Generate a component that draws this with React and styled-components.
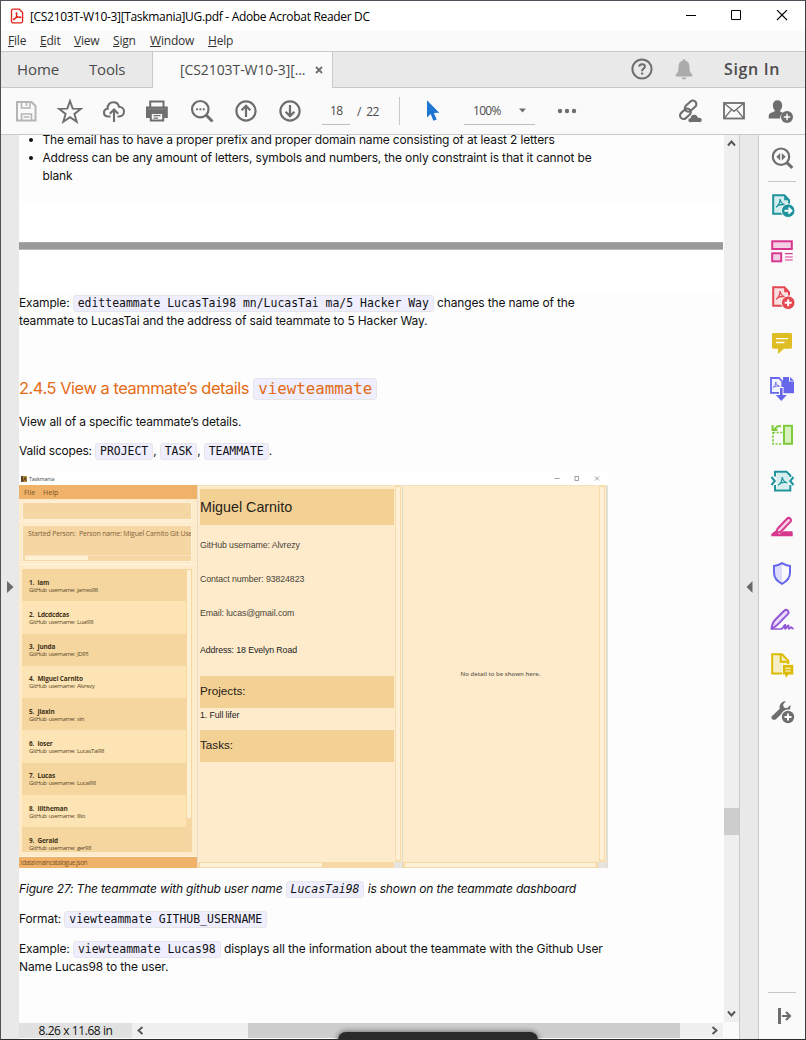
import React from "react";
import styled, { createGlobalStyle } from "styled-components";

const GlobalStyle = createGlobalStyle`
  * { box-sizing: border-box; }
  body { margin: 0; background: #fff; }
  ul, p, h1, h2 { margin: 0; padding: 0; font-weight: 400; }
`;

const ui = `"Open Sans", "Noto Sans", sans-serif`;
const gray = "#6e6e6e";

/* ---------- window chrome ---------- */
const Window = styled.div`
  position: relative;
  width: 806px;
  height: 1040px;
  overflow: hidden;
  display: flex;
  flex-direction: column;
  background: #fafafa;
  border: 1px solid #2b2b2b;
  border-left-color: #55504e;
  border-top-color: #4c525a;
  border-right-color: #3a3c44;
  font-family: ${ui};
`;
const TitleBar = styled.header`
  height: 30px;
  flex: none;
  background: #fff;
  display: flex;
  align-items: center;
  padding-left: 9px;
  font-size: 12px;
  color: #000;
`;
const TitleText = styled.span`
  margin-left: 6px;
  flex: 1;
  white-space: nowrap;
  letter-spacing: ${(p) => p.$ls}px;
`;
const WindowButton = styled.span`
  width: 46px;
  height: 28px;
  display: flex;
  align-items: center;
  justify-content: center;
`;
const MenuBar = styled.nav`
  height: 21px;
  flex: none;
  background: #fafafa;
  border-bottom: 1px solid #c9c9c9;
  display: flex;
  padding-left: 7px;
`;
const MenuItem = styled.span`
  width: ${(p) => p.$w}px;
  font-size: 12px;
  line-height: 19px;
  letter-spacing: -0.2px;
  color: #333;
  white-space: nowrap;
`;
const TabBar = styled.div`
  height: 36px;
  flex: none;
  background: #e9e9e9;
  border-bottom: 1px solid #c9c9c9;
  display: flex;
  color: #4b4b4b;
  font-size: 15px;
  line-height: 34px;
`;
const NavTab = styled.span`
  width: ${(p) => p.$w}px;
  padding-left: 16px;
  letter-spacing: ${(p) => p.$ls}px;
`;
const FileTab = styled.div`
  width: 181px;
  height: 36px;
  background: #fafafa;
  border-left: 1px solid #c9c9c9;
  border-right: 1px solid #c9c9c9;
  display: flex;
  align-items: center;
  padding-left: 27px;
  font-size: 14px;
  letter-spacing: ${(p) => p.$ls}px;
  white-space: nowrap;
`;
const TabLabel = styled.span`
  width: 135px;
`;
const TabActions = styled.div`
  margin-left: auto;
  height: 34px;
  display: flex;
  align-items: center;
`;
const ActionSlot = styled.span`
  width: 42px;
  height: 28px;
  display: flex;
  justify-content: center;
  svg { display: block; }
`;
const SignIn = styled.span`
  width: 81px;
  margin-left: 19px;
  font-size: 16px;
  font-weight: 600;
  letter-spacing: 0.65px;
  white-space: nowrap;
`;
const Toolbar = styled.div`
  height: 47px;
  flex: none;
  background: #fafafa;
  border-bottom: 1px solid #c9c9c9;
  display: flex;
  align-items: center;
  padding-left: 3px;
  font-size: 12px;
  color: #4b4b4b;
`;
const ToolSlot = styled.span`
  width: ${(p) => p.$w || 44}px;
  height: 28px;
  display: flex;
  justify-content: center;
  svg { display: block; overflow: visible; }
`;
const Field = styled.span`
  width: ${(p) => p.$w}px;
  height: 28px;
  margin-left: ${(p) => p.$ml}px;
  border-bottom: 1px solid #c0c0c0;
  display: flex;
  align-items: center;
  justify-content: space-between;
  padding: 0 ${(p) => p.$px}px;
  letter-spacing: ${(p) => p.$ls || 0}px;
`;
const PageTotal = styled.span`
  margin-left: 7px;
  width: 42px;
  white-space: pre;
  letter-spacing: -0.5px;
`;
const ToolDivider = styled.span`
  width: 1px;
  height: 28px;
  background: #c9c9c9;
`;
const Spacer = styled.span`
  flex: 1;
`;

/* ---------- body columns ---------- */
const Body = styled.div`
  flex: 1;
  min-height: 0;
  display: flex;
`;
const SideStrip = styled.div`
  width: ${(p) => p.$w}px;
  flex: none;
  background: #e9e9e9;
  display: flex;
  align-items: center;
  justify-content: center;
  border-left: ${(p) => (p.$edge ? "1px solid #c9c9c9" : "0")};
  border-right: ${(p) => (p.$edge ? "1px solid #c9c9c9" : "0")};
`;
const Viewer = styled.main`
  width: 705px;
  flex: none;
  display: flex;
  flex-direction: column;
  background: #fdfdfd;
`;
const Pages = styled.div`
  height: 888px;
  width: 704px;
  overflow: hidden;
`;
const BottomBar = styled.div`
  height: 15px;
  width: 704px;
  display: flex;
`;
const PageSize = styled.div`
  width: 113px;
  background: #e1e1e1;
  font-size: 12px;
  line-height: 16px;
  text-align: center;
  letter-spacing: -0.42px;
  color: #111;
  white-space: nowrap;
`;
const HTrack = styled.div`
  flex: 1;
  background: #f0f0f0;
  display: flex;
  align-items: center;
  padding: 0 4px;
`;
const HThumb = styled.div`
  width: 432px;
  height: 15px;
  margin-left: 103px;
  background: #cdcdcd;
`;
const VScroll = styled.div`
  width: 15px;
  height: 887px;
  flex: none;
  background: #efefef;
  display: flex;
  flex-direction: column;
  align-items: center;
  padding: 4px 0;
`;
const VThumb = styled.div`
  width: 15px;
  height: 27px;
  margin-top: 660px;
  background: #cdcdcd;
`;
const ToolPanel = styled.aside`
  flex: 1;
  display: flex;
  flex-direction: column;
  align-items: center;
  background: #fafafa;
`;
const PanelSlot = styled.span`
  height: 46px;
  width: 28px;
  display: flex;
  align-items: center;
  svg { display: block; }
`;
const PanelRule = styled.span`
  width: 28px;
  height: 1px;
  background: #c6c6c6;
`;
const DarkDock = styled.div`
  position: absolute;
  left: 337px;
  bottom: -4px;
  width: 200px;
  height: 11px;
  border-radius: 8px 8px 0 0;
  background: #2a2a2a;
  box-shadow: 0 0 5px 1px rgba(0, 0, 0, 0.45);
`;

/* ---------- PDF pages ---------- */
const PageEnd = styled.section`
  display: flow-root;
  height: 107px;
  background: linear-gradient(#fdfdfd 67px, #fff 67px);
`;
const PageGap = styled.div`
  height: 8px;
  background: #999;
  border-top: 1px solid #aaa;
  border-bottom: 1px solid #bbb;
`;
const Page = styled.section`
  padding-top: 44px;
  background: linear-gradient(#fff 42px, #fdfdfd 42px);
`;
const BulletList = styled.ul`
  list-style: none;
  && { margin-top: -4px; }
`;
const Bullet = styled.li`
  display: flex;
  padding-left: 10px;
  &::before {
    content: "";
    width: 4px;
    height: 4px;
    margin: 7px 9.5px 0 0;
    border-radius: 50%;
    background: #111;
  }
`;
const Para = styled.p`
  margin-top: ${(p) => p.$mt || 0}px;
`;
const Line = styled.span`
  display: block;
  height: 18px;
  font: ${(p) => (p.$italic ? "italic" : "normal")} 12px/18px Inter, sans-serif;
  letter-spacing: ${(p) => p.$ls || -0.155}px;
  color: #111;
  white-space: nowrap;
`;
const Code = styled.code`
  display: inline-block;
  height: ${(p) => (p.$big ? 22 : 17)}px;
  padding: 0 4px;
  border: 1px solid #e6e6ea;
  border-radius: 3px;
  background: #eeeefe;
  font-family: "DejaVu Sans Mono", monospace;
  font-size: ${(p) => (p.$big ? 15.8 : 11.45)}px;
  line-height: ${(p) => (p.$big ? 20 : 15)}px;
  letter-spacing: 0;
`;
const Heading = styled.h2`
  && { margin-top: 47px; }
  height: 22px;
  font: 400 16.4px/22px Inter, sans-serif;
  letter-spacing: ${(p) => p.$ls}px;
  color: #e46a14;
  white-space: nowrap;
`;

/* ---------- embedded Taskmania window ---------- */
const Figure = styled.figure`
  margin: 12px 0 12px;
  width: 589px;
  height: 396px;
  background: #fff;
  display: flex;
  flex-direction: column;
`;
const AppTitle = styled.div`
  height: 13px;
  flex: none;
  display: flex;
  align-items: center;
  padding-left: 2px;
  font-size: 5.3px;
  letter-spacing: -0.15px;
  color: #444;
`;
const AppLogo = styled.svg`
  margin-right: 2px;
`;
const AppControls = styled.svg`
  margin: 0 7px 0 auto;
`;
const AppBody = styled.div`
  flex: 1;
  display: flex;
  background: #fdebcc;
  min-height: 0;
`;
const Sidebar = styled.div`
  width: 178px;
  flex: none;
  display: flex;
  flex-direction: column;
`;
const AppBar = styled.div`
  height: ${(p) => p.$h}px;
  flex: none;
  background: #f0b268;
  padding-left: ${(p) => p.$pl}px;
  display: flex;
  align-items: center;
  gap: 8px;
  font-size: ${(p) => p.$fs}px;
  letter-spacing: ${(p) => p.$ls || 0}px;
  color: #7a5225;
`;
const CommandBox = styled.div`
  height: 18px;
  margin: 3px 5px 0 3px;
  background: #f6d6a3;
  border: 1px solid #fef1d9;
`;
const Rule = styled.div`
  height: 1px;
  margin-top: ${(p) => p.$mt}px;
  background: #fef3df;
`;
const ResultBox = styled.div`
  height: 37px;
  margin: 3px 5px 0 3px;
  background: #f6d6a3;
  border: 1px solid #fef1d9;
  overflow: hidden;
  display: flex;
  flex-direction: column;
  justify-content: space-between;
  color: #806138;
  font-size: 6.9px;
  line-height: 9px;
  white-space: pre;
`;
const ResultText = styled.span`
  padding: 3px 0 0 5px;
  letter-spacing: ${(p) => p.$ls}px;
`;
const ResultScroll = styled.div`
  height: 6px;
  border-top: 1px solid #fae3ba;
  padding-left: 2px;
  &::before {
    content: "";
    display: block;
    width: 63px;
    height: 4px;
    border-radius: 1px;
    background: #fef0d2;
  }
`;
const PersonArea = styled.div`
  margin: 4px 5px 0 3px;
  height: 283px;
  display: flex;
  background: #f6d7a2;
  overflow: hidden;
`;
const People = styled.div`
  width: 164px;
`;
const Person = styled.div`
  height: 32.3px;
  padding: 8.6px 0 0 7px;
  background: ${(p) => (p.$alt ? "#fde4b4" : "#f5d69f")};
  color: #3f3218;
  white-space: pre;
`;
const PersonName = styled.div`
  font-size: 6.4px;
  line-height: 9px;
  font-weight: 700;
  letter-spacing: -0.1px;
`;
const PersonUser = styled.div`
  font-size: 6px;
  line-height: 7.6px;
  letter-spacing: -0.36px;
  word-spacing: 0.6px;
  color: #5b4a2a;
`;
const PersonThumb = styled.div`
  width: 4px;
  height: 248px;
  margin: 1px 0 0 1px;
  border-radius: 1px;
  background: #fef0d2;
`;
const Pane = styled.div`
  display: flex;
  flex-direction: column;
  width: ${(p) => p.$w}px;
  flex: none;
  border-left: 1px solid #e3dccb;
`;
const PaneRow = styled.div`
  display: flex;
  flex: 1;
  min-height: 0;
`;
const Details = styled.div`
  flex: 1;
  padding: 3px 0 0 2px;
  font-family: "Liberation Sans", Arial, sans-serif;
  border-top: 1px solid #f4e0ba;
`;
const Band = styled.div`
  height: ${(p) => p.$h}px;
  margin-top: ${(p) => p.$mt || 0}px;
  background: #f3d094;
  font-size: ${(p) => p.$fs}px;
  line-height: ${(p) => p.$lh}px;
  color: #26221a;
`;
const Fact = styled.div`
  height: 12px;
  margin-top: ${(p) => p.$mt}px;
  font-size: 8.8px;
  line-height: 12px;
  letter-spacing: -0.1px;
  color: ${(p) => (p.$dark ? "#222" : "#4a4538")};
  white-space: nowrap;
`;
const Empty = styled.div`
  flex: 1;
  display: flex;
  align-items: center;
  justify-content: center;
  border-top: 1px solid #f4e0ba;
  font-size: 6px;
  font-weight: 600;
  color: #6b6557;
`;
const PaneVScroll = styled.div`
  width: 6px;
  margin: 0 1px;
  padding: 2px 1px;
  background: #f8dcaa;
  &::before {
    content: "";
    display: block;
    height: 100%;
    border-radius: 1px;
    background: #fef0d6;
  }
`;
const PaneFoot = styled.div`
  height: 6px;
  flex: none;
  display: flex;
  background: #e6e4df;
`;
const PaneHScroll = styled.div`
  flex: 1;
  margin-right: 8px;
  background: #f7d9a6;
  padding: 1px 0 1px 2px;
  &::before {
    content: "";
    display: block;
    width: ${(p) => p.$w}px;
    height: 4px;
    border-radius: 1px;
    background: #fef0d6;
  }
`;
const AppEdge = styled.div`
  flex: 1;
  background: #e3dfd4;
`;

/* ---------- icons ---------- */
const Svg = ({ children, w = 28, h = 28, color = gray, sw = 2 }) => (
  <svg width={w} height={h} viewBox={`0 0 ${w} ${h}`} fill="none" stroke={color} strokeWidth={sw}>
    {children}
  </svg>
);

const SaveIcon = () => (
  <Svg color="#b5b5b5">
    <path d="M5 5h14.500l4 4v14.500H5z" />
    <path d="M9.500 5v6h8.500V5M14.500 6v3" strokeWidth="1.500" />
    <path d="M9.500 23v-6h10v6M11.500 20h6" strokeWidth="1.600" />
  </Svg>
);
const StarIcon = () => (
  <Svg sw={1.9}>
    <path d="M14 4l2.700 7.600 8.100.300-6.400 5 2.300 7.800L14 20.100l-6.700 4.600 2.300-7.800-6.400-5 8.100-.3z" />
  </Svg>
);
const CloudUpIcon = () => (
  <Svg sw={2.1}>
    <path d="M10.500 19.500H8.200C5.600 19.500 4 17.800 4 15.600c0-2.100 1.500-3.700 3.600-3.900C7.300 7.900 10 5.200 13.300 5.200c3 0 5.200 2 5.700 4.600 3 0 5 2 5 4.800 0 2.800-2 4.900-4.700 4.900H17.500" />
    <path d="M14 25V13M9.800 16.700L14 12.500l4.200 4.200" />
  </Svg>
);
const PrintIcon = () => (
  <Svg>
    <g transform="translate(-1 0)">
      <path d="M7.200 10.500V4.500h13.300v6" />
      <path d="M3 9.500h21.800V21H20v-4H7.500v4H3z" fill={gray} stroke="none" />
      <path d="M5 12h18" stroke="#8b8b8b" strokeWidth=".8" />
      <path d="M7.800 16h12.400v7.500H7.800z" fill="#fafafa" />
      <path d="M10.500 18.700h7M10.500 21.200h4.500" strokeWidth="1.200" />
    </g>
  </Svg>
);
const ZoomIcon = () => (
  <Svg sw={2.2}>
    <circle cx="12.300" cy="12.200" r="8.200" />
    <path d="M18.300 18.200l6.200 6.300" strokeWidth="3" />
    <path d="M8 12.200h1.900M11.400 12.200h1.900M14.800 12.200h1.900" strokeWidth="1.900" />
  </Svg>
);
const ArrowCircle = ({ down }) => (
  <Svg sw={2.2}>
    <circle cx="14" cy="14" r="9.600" />
    <path d={down ? "M14 8v11M9.600 14.700l4.400 4.400 4.400-4.400" : "M14 20V9M9.600 13.300L14 8.900l4.400 4.400"} />
  </Svg>
);
const CursorIcon = () => (
  <svg width="14" height="28" viewBox="0 0 14 28">
    <path d="M2 3.300v17.200l3.700-3.600 2.700 6.800 3.300-1.300-2.800-6.500 5.300-.200z" fill="#1f76d2" />
  </svg>
);
const LinkCloudIcon = () => (
  <Svg sw={2.1}>
    <g transform="rotate(-42 12 13)">
      <rect x="1.500" y="10.600" width="12" height="7" rx="3.500" />
      <rect x="10" y="8.400" width="13" height="7" rx="3.500" />
    </g>
    <path d="M14.500 25.500c-1.800 0-2.800-1.200-2.600-2.600.2-1.300 1.200-2 2.300-2 .5-2.500 2-3.700 4-3.700 1.900 0 3.300 1.100 3.800 3 2.700-.1 4.200 1.100 4.200 2.800 0 1.500-1.100 2.500-2.600 2.500z" fill={gray} stroke="#fafafa" strokeWidth="1" />
  </Svg>
);
const MailIcon = () => (
  <Svg sw={1.8}>
    <rect x="4" y="6" width="20" height="15.500" />
    <path d="M4.500 6.500l9.500 7.800 9.500-7.800M4.500 21l7-8.300M23.500 21l-7-8.300" strokeWidth="1.300" />
  </Svg>
);
const PersonAddIcon = () => (
  <Svg>
    <path d="M11.500 3.200c3 0 4.700 2.100 4.700 5 0 2.300-.8 4-2 5.200v1.200l3 1.500c-2.500 1.500-3.200 3.300-3 5.500H2.700v-2.400c0-2 .8-2.900 2.500-3.500l3.500-1.500v-1C7.500 12 6.900 10.500 6.900 8.200c0-2.900 1.600-5 4.600-5z" fill={gray} stroke="none" transform="translate(-1 0)" />
    <circle cx="20" cy="20" r="6" fill={gray} stroke="none" />
    <path d="M20 16.800v6.400M16.800 20h6.400" stroke="#fff" strokeWidth="1.400" />
  </Svg>
);
const HelpIcon = () => (
  <Svg sw={2}>
    <circle cx="14" cy="14" r="9.600" />
    <path d="M11.200 11.700c.2-1.600 1.300-2.400 2.900-2.400 1.700 0 2.800.9 2.800 2.300 0 2-2.800 2.100-2.800 4.200v.4" />
    <path d="M13 18.600h2.200" />
  </Svg>
);
const BellIcon = () => (
  <Svg>
    <path d="M14 4.300c1 0 1.500.7 1.500 1.500 2.600.7 4 2.800 4 5.800 0 4.700.6 6.300 2.800 8v1.900H5.700v-1.900c2.200-1.700 2.800-3.300 2.800-8 0-3 1.400-5.100 4-5.800 0-.8.500-1.500 1.500-1.500zM11.500 22.500h5c-.3 1.300-1.300 1.900-2.500 1.900s-2.200-.6-2.500-1.900z" fill="#ababab" stroke="none" />
  </Svg>
);
const PdfIcon = () => (
  <svg width="14" height="17" viewBox="0 0 14 17" fill="none" stroke="#e2231a">
    <path d="M3 1.200h6.300l3.300 3.300v8.700c0 1-.7 1.700-1.700 1.700H3.200c-1 0-1.700-.7-1.700-1.700V2.900c0-1 .6-1.700 1.500-1.700z" strokeWidth="1.300" />
    <path d="M3.800 11.700c1.500-1 3-4 3.100-6 0-1.200-.9-1.200-.8 0 .2 2 2.200 3.900 4.100 4.100 1.300 0 1-1-.3-.9-2 .1-4.300.9-5.800 1.800-1 .7-1 1.300-.3 1z" strokeWidth="1.100" />
  </svg>
);

const Acrobat = ({ x, y, s = 1 }) => (
  <path transform={`translate(${x} ${y}) scale(${s})`} d="M0 9.500c2.400-1.500 4-5 4.100-8.200M4.100 1.500c.3 2.600 2 4.700 4.700 5.600M1.500 7.900c2-1.200 4.700-1.500 7.500-.9" strokeWidth={1.300} />
);
const DocBadge = ({ color, fill, badge }) => (
  <Svg color={color}>
    <path d="M5.200 4.300h11.200l4.600 4.900v13.600H5.200z" fill={fill} />
    <path d="M16.200 3.800v5.400h5z" fill={color} stroke="none" />
    <Acrobat x={8} y={6.800} />
    <circle cx="20.200" cy="19.700" r="6.800" fill={color} stroke="#fafafa" strokeWidth="1" />
    <path d={badge} stroke="#fff" strokeWidth="1.900" />
  </Svg>
);
const PanelSearch = () => (
  <Svg sw={2.2}>
    <circle cx="13" cy="12.700" r="8.200" />
    <path d="M19 18.800l5.300 5" strokeWidth="3" />
    <path d="M8.300 12.700L12.200 9v7.400zM17.700 12.700L13.800 9v7.400z" fill={gray} stroke="none" />
  </Svg>
);
const Organize = () => (
  <Svg color="#d83790">
    <rect x="4.200" y="4.300" width="19.600" height="7.700" fill="#f5d0e4" />
    <rect x="4.200" y="16.300" width="9" height="8" fill="#f5d0e4" />
    <path d="M17 16.700h7.700M17 20h7.700M17 23h7.700" strokeWidth="1.200" />
  </Svg>
);
const Comment = () => (
  <Svg>
    <path d="M5.500 4h17c.9 0 1.500.6 1.500 1.500v12.700c0 .9-.6 1.500-1.500 1.500h-6.700L10 25v-5.300H5.500c-.9 0-1.500-.6-1.500-1.500V5.500C4 4.600 4.600 4 5.500 4z" fill="#dfbd24" stroke="none" />
    <path d="M8 9.700h12M8 13.500h8.500" stroke="#fff" strokeWidth="1.300" />
  </Svg>
);
const Combine = () => (
  <Svg color="#6767ec">
    <path d="M3 3h8l3.300 3.500v11.300H3z" fill="#f3f3ff" strokeWidth="1.800" />
    <path d="M15 2h6v4.500h5v11.800H12V12h3zM22 2l4 3.800h-4z" fill="#6767ec" stroke="none" />
    <Acrobat x={4.700} y={6} s={0.75} />
    <path d="M13.300 12v10" stroke="#fafafa" strokeWidth="4.500" />
    <path d="M13.300 13v8" strokeWidth="2.600" />
    <path d="M7.800 20h11L13.300 26z" fill="#6767ec" stroke="none" />
  </Svg>
);
const Crop = () => (
  <Svg color="#7fcb3c">
    <rect x="16" y="4.800" width="8" height="18" fill="#d8f1c0" />
    <path d="M5 11v12h9.500M5 11.500h9.500" strokeDasharray="2.200 1.400" strokeWidth="1.700" />
    <path d="M13 5.300H9.500L6 8.500M4.500 4v5h5" />
  </Svg>
);
const Compress = () => (
  <Svg color="#1d939c">
    <path d="M8.500 6h9l4 4v12h-13z" fill="#d8edee" stroke="none" />
    <path d="M7 9.500V4.700h11.500L22.300 8.500V10M22.300 18v5.500H7V18" />
    <path d="M3.500 10l3.300 4-3.300 4M25.500 10l-3.300 4 3.300 4" />
    <Acrobat x={10.2} y={8.700} />
  </Svg>
);
const Highlight = () => (
  <Svg color="#d83790">
    <path d="M9.500 15.800L19 5.700c1-1 2.300-1 3.300-.1 1 1 .9 2.300 0 3.300L12.800 18.700 8 20z" fill="#f5d0e4" strokeLinejoin="round" />
    <path d="M3.300 23.300v-2.200l4-3.400 3.800 3.500 4.200-3h8c.9 0 1.400.5 1.400 1.400v3.700z" fill="#d83790" stroke="none" />
  </Svg>
);
const Shield = () => (
  <Svg color="#6767ec">
    <path d="M14 4.200c-2.500 1.600-5 2.500-8 2.700v6.600c0 5 3 8.800 8 11.300z" fill="#dcdcfa" stroke="none" />
    <path d="M14 4.200c2.500 1.600 5 2.500 8 2.700v6.600c0 5-3 8.800-8 11.300-5-2.500-8-6.300-8-11.300V6.900c3-.2 5.500-1.100 8-2.700z" />
  </Svg>
);
const Sign = () => (
  <Svg color="#9256d9">
    <path d="M3.500 23.800c.5-3.800 1.500-6.800 3.700-9l9-9c1-1.100 2.500-1.200 3.600-.2 1.100 1.100 1 2.500 0 3.500l-9 9.300c-2 2.200-4.500 4-7.300 5.400z" fill="#e9dcf8" strokeLinejoin="round" />
    <path d="M4 24h9.500c1.500-1 3.500-5 4-4 .4.900-1.300 3.600-.4 3.800 1 .2 2.500-3.800 3.300-3.500.7.300-.5 3.200.4 3.500.8.200 1.500-1.800 2.200-1.700.6.100.3 1.500 2.700 1.500" strokeWidth="1.700" />
  </Svg>
);
const DocComment = () => (
  <Svg color="#dcbb00">
    <path d="M4.200 3.300h9.800l6.300 6.500v12.700H4.200z" fill="#f5efc8" />
    <path d="M12.700 3.500v7.300h7.500" />
    <path d="M14.500 13.500h11.200v10.400h-5L17 27.400v-3.500h-2.500z" fill="#dcbb00" stroke="#fafafa" strokeWidth=".8" />
    <path d="M17.300 17.200h5.500M17.300 20h5.500" stroke="#fff" strokeWidth="1.100" />
  </Svg>
);
const Wrench = () => (
  <Svg>
    <path d="M3.800 19.200l7.900-7.400c-.9-3.800 1.900-7.600 6.200-7.800l-2.800 3.600.8 3 3.200.6 3.300-3.200c.9 4.400-2.800 7.600-6.700 6.700l-8 7.700c-2.600 1.400-5.300-1-3.900-3.200z" fill={gray} stroke="none" />
    <circle cx="20" cy="20" r="6.800" fill={gray} stroke="#fafafa" strokeWidth="1.200" />
    <path d="M20 16.500v7M16.500 20h7" stroke="#fff" strokeWidth="1.900" />
  </Svg>
);
const CollapseIcon = () => (
  <Svg>
    <path d="M11.500 6v16" strokeWidth="3" />
    <path d="M14 14h8M18 10l4 4-4 4" strokeWidth="2.200" />
  </Svg>
);
const Chevron = ({ d }) => (
  <svg width="9" height="9" viewBox="0 0 9 9" fill="none" stroke="#555" strokeWidth="1.900">
    <path d={d} />
  </svg>
);
const Triangle = ({ d }) => (
  <svg width="7" height="12" viewBox="0 0 7 12">
    <path d={d} fill="#6a6a6a" />
  </svg>
);

/* ---------- data ---------- */
const menus = [
  ["F", "ile", 32],
  ["E", "dit", 34],
  ["V", "iew", 39],
  ["S", "ign", 37],
  ["W", "indow", 58],
  ["H", "elp", 40],
];
const people = [
  ["iam", "james98"],
  ["Ldcdcdcas", "Luai98"],
  ["Junda", "JD95"],
  ["Miguel Carnito", "Alvrezy"],
  ["Jiaxin", "xin"],
  ["loser", "LucasTai98"],
  ["Lucas", "Lucai98"],
  ["Illtheman", "Illio"],
  ["Gerald", "ger98"],
];

const Taskmania = () => (
  <Figure>
    <AppTitle>
      <AppLogo width="6" height="6" viewBox="0 0 6 6">
        <rect width="6" height="6" fill="#b98a3c" />
        <rect width="2" height="6" fill="#5a4630" />
        <path d="M2.500 5L4 1.500 5.300 5" stroke="#3c2c18" fill="none" strokeWidth=".8" />
      </AppLogo>
      Taskmania
      <AppControls width="48" height="7" viewBox="0 0 48 7" fill="none" stroke="#888" strokeWidth=".8">
        <path d="M1.500 3.500h5M42 1.500l4 4M46 1.500l-4 4" />
        <rect x="22" y="1.500" width="3.500" height="4" />
      </AppControls>
    </AppTitle>
    <AppBody>
      <Sidebar>
        <AppBar $h={14} $pl={5} $fs={7}>
          <span>File</span>
          <span>Help</span>
        </AppBar>
        <CommandBox />
        <Rule $mt={1} />
        <ResultBox>
          <ResultText $ls={-0.13}>Started Person:  Person name: Miguel Carnito Git Username</ResultText>
          <ResultScroll />
        </ResultBox>
        <Rule $mt={2} />
        <PersonArea>
          <People>
            {people.map(([name, user], i) => (
              <Person key={name} $alt={i % 2 === 1}>
                <PersonName>{`${i + 1}.  ${name}`}</PersonName>
                <PersonUser>GitHub username: {user}</PersonUser>
              </Person>
            ))}
          </People>
          <PersonThumb />
        </PersonArea>
        <Rule $mt={4} />
        <Spacer />
        <AppBar $h={11} $pl={0} $fs={6.4} $ls={-0.38}>.\data\maincatalogue.json</AppBar>
      </Sidebar>
      <Pane $w={205}>
        <PaneRow>
          <Details>
            <Band $h={36} $fs={14.3} $lh={37}>Miguel Carnito</Band>
            <Fact $mt={14}>GitHub username: Alvrezy</Fact>
            <Fact $mt={21.5}>Contact number: 93824823</Fact>
            <Fact $mt={22.5}>Email: lucas@gmail.com</Fact>
            <Fact $mt={25} $dark>Address: 18 Evelyn Road</Fact>
            <Band $h={32} $fs={11.7} $lh={30} $mt={20}>Projects:</Band>
            <Fact $mt={1} $dark>1. Full lifer</Fact>
            <Band $h={32} $fs={11.7} $lh={30} $mt={9}>Tasks:</Band>
          </Details>
          <PaneVScroll />
        </PaneRow>
        <PaneFoot>
          <PaneHScroll $w={122} />
        </PaneFoot>
      </Pane>
      <Pane $w={204}>
        <PaneRow>
          <Empty>No detail to be shown here.</Empty>
          <PaneVScroll />
        </PaneRow>
        <PaneFoot>
          <PaneHScroll $w={191} />
        </PaneFoot>
      </Pane>
      <AppEdge />
    </AppBody>
  </Figure>
);

export default function App() {
  return (
    <Window>
      <GlobalStyle />
      <TitleBar>
        <PdfIcon />
        <TitleText $ls={-0.32}>[CS2103T-W10-3][Taskmania]UG.pdf - Adobe Acrobat Reader DC</TitleText>
        <WindowButton>
          <Svg w={12} h={12} color="#000" sw={1}><path d="M2 5.500h10" /></Svg>
        </WindowButton>
        <WindowButton>
          <Svg w={12} h={12} color="#000" sw={1}><path d="M1.500.5h9v9h-9z" /></Svg>
        </WindowButton>
        <WindowButton>
          <Svg w={12} h={12} color="#000" sw={1.1}><path d="M1 0l10 10M11 0L1 10" /></Svg>
        </WindowButton>
      </TitleBar>
      <MenuBar>
        {menus.map(([key, rest, w]) => (
          <MenuItem key={key} $w={w}><u>{key}</u>{rest}</MenuItem>
        ))}
      </MenuBar>
      <TabBar>
        <NavTab $w={72} $ls={-0.1}>Home</NavTab>
        <NavTab $w={79} $ls={-0.2}>Tools</NavTab>
        <FileTab $ls={-0.08}>
          <TabLabel>[CS2103T-W10-3][...</TabLabel>
          <Svg w={8} h={8} sw={1.8}><path d="M1 1l6 6M7 1L1 7" /></Svg>
        </FileTab>
        <TabActions>
          <ActionSlot><HelpIcon /></ActionSlot>
          <ActionSlot><BellIcon /></ActionSlot>
          <SignIn>Sign In</SignIn>
        </TabActions>
      </TabBar>
      <Toolbar>
        <ToolSlot><SaveIcon /></ToolSlot>
        <ToolSlot><StarIcon /></ToolSlot>
        <ToolSlot><CloudUpIcon /></ToolSlot>
        <ToolSlot><PrintIcon /></ToolSlot>
        <ToolSlot><ZoomIcon /></ToolSlot>
        <ToolSlot><ArrowCircle /></ToolSlot>
        <ToolSlot><ArrowCircle down /></ToolSlot>
        <Field $w={28} $ml={10} $px={8} $ls={-0.5}>18</Field>
        <PageTotal>/  22</PageTotal>
        <ToolDivider />
        <ToolSlot $w={64}><CursorIcon /></ToolSlot>
        <Field $w={71} $ml={0} $px={9} $ls={-0.7}>
          <span>100%</span>
          <svg width="7" height="5" viewBox="0 0 7 5"><path d="M0 .5h7L3.500 4.500z" fill={gray} /></svg>
        </Field>
        <ToolSlot $w={64}>
          <svg width="20" height="28" viewBox="0 0 20 28" fill={gray}>
            <circle cx="3" cy="14" r="2.200" /><circle cx="10" cy="14" r="2.200" /><circle cx="17" cy="14" r="2.200" />
          </svg>
        </ToolSlot>
        <Spacer />
        <ToolSlot><LinkCloudIcon /></ToolSlot>
        <ToolSlot><MailIcon /></ToolSlot>
        <ToolSlot $w={49}><PersonAddIcon /></ToolSlot>
      </Toolbar>
      <Body>
        <SideStrip $w={18}><Triangle d="M0 0l6.500 6L0 12z" /></SideStrip>
        <Viewer>
          <Pages>
            <PageEnd>
              <BulletList>
                <Bullet><Line>The email has to have a proper prefix and proper domain name consisting of at least 2 letters</Line></Bullet>
                <Bullet>
                  <span>
                    <Line>Address can be any amount of letters, symbols and numbers, the only constraint is that it cannot be</Line>
                    <Line>blank</Line>
                  </span>
                </Bullet>
              </BulletList>
            </PageEnd>
            <PageGap />
            <Page>
              <Para>
                <Line>Example: <Code>editteammate LucasTai98 mn/LucasTai ma/5 Hacker Way</Code> changes the name of the</Line>
                <Line>teammate to LucasTai and the address of said teammate to 5 Hacker Way.</Line>
              </Para>
              <Heading $ls={-0.44}>2.4.5 View a teammate’s details <Code $big>viewteammate</Code></Heading>
              <Para $mt={14}>
                <Line>View all of a specific teammate’s details.</Line>
              </Para>
              <Para $mt={11}>
                <Line $ls={-0.2}>Valid scopes: <Code>PROJECT</Code>, <Code>TASK</Code>, <Code>TEAMMATE</Code>.</Line>
              </Para>
              <Taskmania />
              <Para>
                <Line $italic $ls={-0.185}>Figure 27: The teammate with github user name <Code>LucasTai98</Code> is shown on the teammate dashboard</Line>
              </Para>
              <Para $mt={12}>
                <Line>Format: <Code>viewteammate GITHUB_USERNAME</Code></Line>
              </Para>
              <Para $mt={12}>
                <Line $ls={-0.13}>Example: <Code>viewteammate Lucas98</Code> displays all the information about the teammate with the Github User</Line>
                <Line $ls={-0.12}>Name Lucas98 to the user.</Line>
              </Para>
            </Page>
          </Pages>
          <BottomBar>
            <PageSize>8.26 x 11.68 in</PageSize>
            <HTrack>
              <Chevron d="M6.500 1L2.500 4.500l4 3.500" />
              <HThumb />
              <Spacer />
              <Chevron d="M2.500 1l4 3.500-4 3.500" />
            </HTrack>
          </BottomBar>
        </Viewer>
        <VScroll>
          <Chevron d="M1 6.500l3.500-4 3.500 4" />
          <VThumb />
          <Spacer />
          <Chevron d="M1 2.500l3.500 4 3.500-4" />
        </VScroll>
        <SideStrip $w={20} $edge><Triangle d="M6.500 0L.5 6l6 6z" /></SideStrip>
        <ToolPanel>
          <PanelSlot><PanelSearch /></PanelSlot>
          <PanelRule />
          <PanelSlot><DocBadge color="#1d939c" fill="#d5ecec" badge="M16.500 19.700h6.500M20.500 16.700l3 3-3 3" /></PanelSlot>
          <PanelSlot><Organize /></PanelSlot>
          <PanelSlot><DocBadge color="#e34850" fill="#fbdfe0" badge="M20.200 16.200v7M16.700 19.700h7" /></PanelSlot>
          <PanelSlot><Comment /></PanelSlot>
          <PanelSlot><Combine /></PanelSlot>
          <PanelSlot><Crop /></PanelSlot>
          <PanelSlot><Compress /></PanelSlot>
          <PanelSlot><Highlight /></PanelSlot>
          <PanelSlot><Shield /></PanelSlot>
          <PanelSlot><Sign /></PanelSlot>
          <PanelSlot><DocComment /></PanelSlot>
          <PanelSlot><Wrench /></PanelSlot>
          <Spacer />
          <PanelRule />
          <PanelSlot><CollapseIcon /></PanelSlot>
        </ToolPanel>
      </Body>
      <DarkDock />
    </Window>
  );
}
